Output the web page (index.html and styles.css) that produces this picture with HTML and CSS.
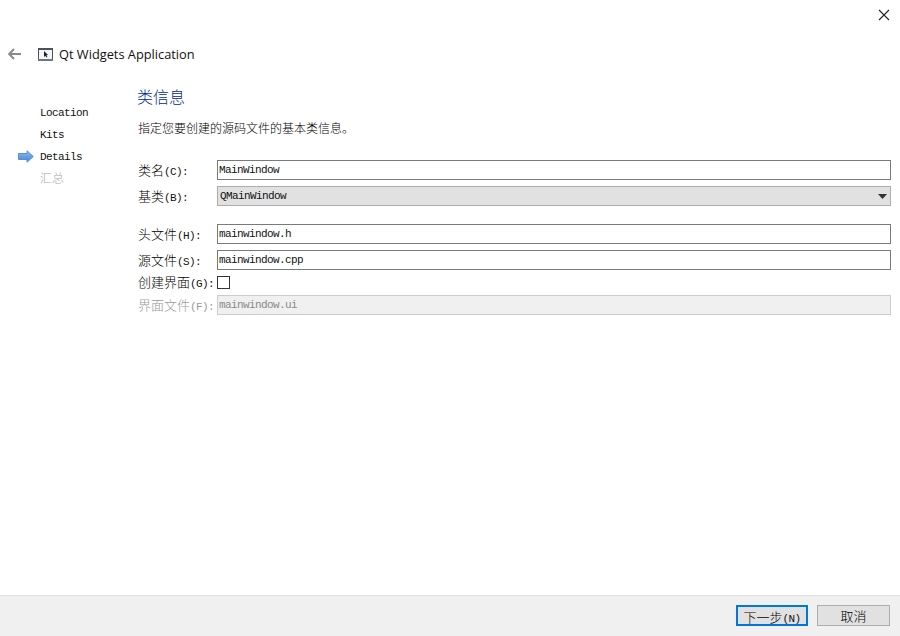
FILE: index.html
```html
<!DOCTYPE html>
<html lang="zh-CN">
<head>
  <meta charset="UTF-8" />
  <title>Qt Widgets Application</title>
  <link rel="stylesheet" href="styles.css">
</head>
<body>
  <div class="wizard">
    <div class="close-row">
      <svg class="close-icon" width="12" height="12" viewBox="0 0 12 12"><path d="M1 1 L11 11 M11 1 L1 11" stroke="#222" stroke-width="1.1" fill="none"/></svg>
    </div>

    <div class="title-row">
      <svg class="back-icon" width="14" height="12" viewBox="0 0 14 12"><path d="M6 1 L1.2 6 L6 11 M1.2 6 H13" stroke="#8a8a8a" stroke-width="2" fill="none"/></svg>
      <svg class="app-icon" width="15" height="13" viewBox="0 0 15 13">
        <rect x="0.5" y="0.5" width="14" height="11" fill="#f4f6f8" stroke="#4a5260"/>
        <rect x="0" y="0" width="15" height="2" fill="#4a5260"/>
        <rect x="0" y="11" width="15" height="2" fill="#6d7580"/>
        <path d="M6 3 L6 9 L7.4 7.8 L8.4 9.6 L9.4 9 L8.4 7.3 L10 7 Z" fill="#222"/>
      </svg>
      <span class="title">Qt Widgets Application</span>
    </div>

    <div class="main">
      <ul class="steps">
        <li>Location</li>
        <li>Kits</li>
        <li class="current">
          <svg class="step-arrow" width="16" height="13" viewBox="0 0 16 13">
            <defs>
              <linearGradient id="arrowFill" x1="0" y1="0" x2="0" y2="1">
                <stop offset="0" stop-color="#8fbcf0"/>
                <stop offset="1" stop-color="#3f83da"/>
              </linearGradient>
            </defs>
            <path d="M0.5 3.5 H9 V0.8 L15.3 6.5 L9 12.2 V9.5 H0.5 Z" fill="url(#arrowFill)" stroke="#5a8fd0"/>
          </svg>
          Details
        </li>
        <li class="todo"><span class="zh">汇总</span></li>
      </ul>

      <div class="page">
        <h2>类信息</h2>
        <p class="intro">指定您要创建的源码文件的基本类信息。</p>

        <div class="form">
          <div class="row">
            <label><span class="zh">类名</span>(C):</label>
            <input type="text" value="MainWindow" />
          </div>
          <div class="row">
            <label><span class="zh">基类</span>(B):</label>
            <div class="combo">
              <span>QMainWindow</span>
              <svg width="9" height="5" viewBox="0 0 9 5"><path d="M0 0 H9 L4.5 5 Z" fill="#333"/></svg>
            </div>
          </div>
          <div class="row group-start">
            <label><span class="zh">头文件</span>(H):</label>
            <input type="text" value="mainwindow.h" />
          </div>
          <div class="row">
            <label><span class="zh">源文件</span>(S):</label>
            <input type="text" value="mainwindow.cpp" />
          </div>
          <div class="row check-row">
            <label><span class="zh">创建界面</span>(G):</label>
            <span class="checkbox"></span>
          </div>
          <div class="row disabled">
            <label><span class="zh">界面文件</span>(F):</label>
            <input type="text" value="mainwindow.ui" disabled />
          </div>
        </div>
      </div>
    </div>

    <div class="footer">
      <button class="primary"><span class="zh">下一步</span>(N)</button>
      <button><span class="zh">取消</span></button>
    </div>
  </div>
</body>
</html>
```

FILE: styles.css
```css
html, body {
  margin: 0;
  padding: 0;
}

body {
  background: #fff;
  color: #111;
  font-family: "Liberation Mono", "Noto Sans CJK SC", monospace;
  font-size: 11px;
  letter-spacing: -0.6px;
}

.zh {
  font-family: "Noto Sans CJK SC", sans-serif;
  font-size: 13px;
  font-weight: 300;
  letter-spacing: 0;
  color: #000;
}

.wizard {
  width: 900px;
  height: 636px;
  display: flex;
  flex-direction: column;
}

.close-row {
  height: 45px;
  display: flex;
  justify-content: flex-end;
  padding: 9px 10px 0 0;
  box-sizing: border-box;
}

.title-row {
  height: 18px;
  display: flex;
  align-items: center;
  padding-left: 8px;
  margin-bottom: 1px;
}

.app-icon {
  margin-left: 16px;
}

.title {
  margin-left: 6px;
  font-family: "Open Sans", sans-serif;
  font-size: 12.8px;
  letter-spacing: 0;
}

.main {
  flex: 1;
  display: flex;
}

.steps {
  width: 137px;
  margin: 38px 0 0;
  padding: 0;
  list-style: none;
}

.steps li {
  height: 22px;
  line-height: 22px;
  padding-left: 40px;
  position: relative;
}

.step-arrow {
  position: absolute;
  left: 18px;
  top: 4px;
}

.steps .todo .zh {
  display: block;
  font-size: 12px;
  line-height: 20px;
  color: #a8a8a8;
}

.page {
  flex: 1;
  padding-right: 9px;
}

h2 {
  margin: 20px 0 0;
  height: 24px;
  line-height: 24px;
  font-family: "Noto Sans CJK SC", sans-serif;
  font-size: 16px;
  font-weight: 300;
  letter-spacing: 0;
  color: #00289c;
}

.intro {
  margin: 9px 0 0 1px;
  height: 22px;
  line-height: 22px;
  font-family: "Noto Sans CJK SC", sans-serif;
  font-size: 12px;
  font-weight: 300;
  letter-spacing: 0;
  color: #000;
}

.form {
  margin-top: 21px;
  display: flex;
  flex-direction: column;
  gap: 6px;
}

.row {
  display: flex;
  align-items: center;
  height: 20px;
}

.row label {
  width: 79px;
  margin-left: 1px;
  padding-bottom: 2px;
  flex-shrink: 0;
}

.group-start {
  margin-top: 12px;
}

.check-row {
  height: 13px;
}

input[type="text"],
.combo {
  flex: 1;
  height: 20px;
  box-sizing: border-box;
  border: 1px solid #7a7a7a;
  padding: 0 1px;
  font: inherit;
  letter-spacing: inherit;
  color: #111;
  background: #fff;
  outline: none;
}

.combo {
  display: flex;
  align-items: center;
  justify-content: space-between;
  padding: 0 3px 0 2px;
  background: #e1e1e1;
  border-color: #adadad;
}

.checkbox {
  width: 13px;
  height: 13px;
  box-sizing: border-box;
  border: 1px solid #333;
  background: #fff;
}

.disabled label,
.disabled label .zh {
  color: #9a9a9a;
}

.disabled input[type="text"] {
  background: #f0f0f0;
  border-color: #ccc;
  color: #8a8a8a;
}

.footer {
  height: 41px;
  box-sizing: border-box;
  border-top: 1px solid #dfdfdf;
  background: #f0f0f0;
  display: flex;
  justify-content: flex-end;
  gap: 9px;
  padding: 9px 10px 0 0;
}

button {
  width: 73px;
  height: 21px;
  box-sizing: border-box;
  padding: 0;
  background: #e1e1e1;
  border: 1px solid #adadad;
  font: inherit;
  letter-spacing: inherit;
  color: #111;
}

button.primary {
  width: 72px;
  border: 2px solid #0078d7;
}
```
